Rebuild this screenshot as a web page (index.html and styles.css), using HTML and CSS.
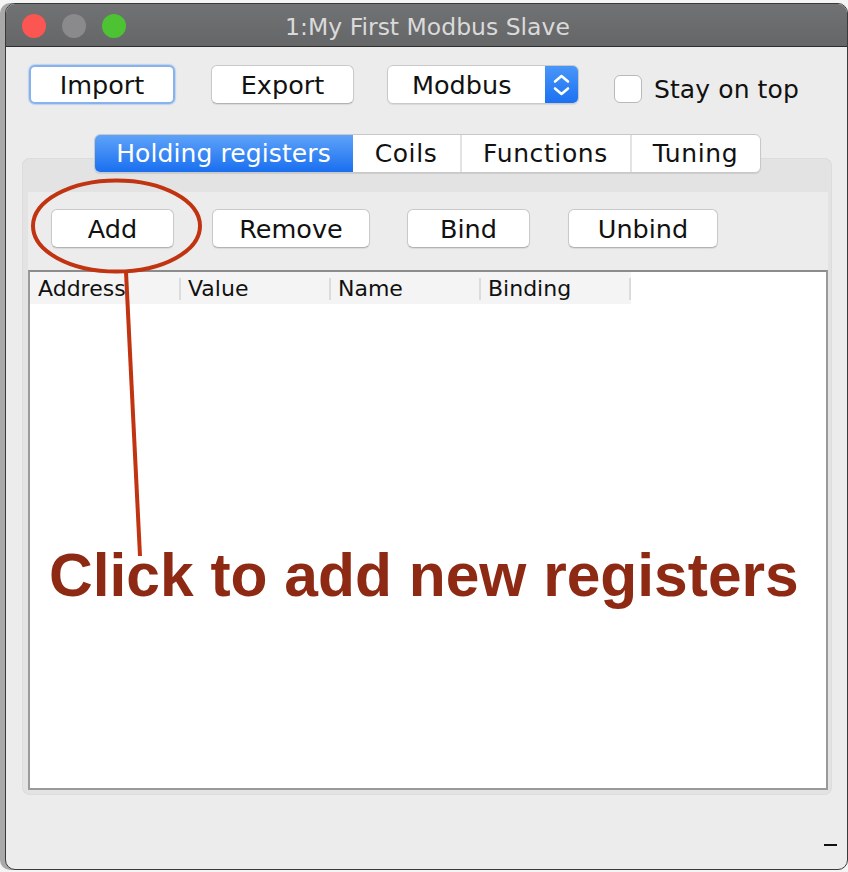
FILE: index.html
```html
<!DOCTYPE html>
<html>
<head>
<meta charset="utf-8">
<link rel="stylesheet" href="styles.css">
</head>
<body>
<div class="window">
  <div class="titlebar">
    <div class="lights">
      <span class="light red"></span>
      <span class="light gray"></span>
      <span class="light green"></span>
    </div>
    <div class="title">1:My First Modbus Slave</div>
  </div>
  <div class="content">
    <div class="toolbar">
      <div class="btn focus w-import">Import</div>
      <div class="btn w-export">Export</div>
      <div class="combo">
        <span class="combo-label">Modbus</span>
        <span class="combo-arrows">
          <svg width="33" height="39" viewBox="0 0 33 39"><path d="M10 16.5 L16.5 11 L23 16.5" fill="none" stroke="#fff" stroke-width="2.6" stroke-linecap="round" stroke-linejoin="round"/><path d="M10 23.5 L16.5 29 L23 23.5" fill="none" stroke="#fff" stroke-width="2.6" stroke-linecap="round" stroke-linejoin="round"/></svg>
        </span>
      </div>
      <div class="check"><span class="box"></span><span class="check-label">Stay on top</span></div>
    </div>
    <div class="tabs">
      <div class="tabgroup">
        <div class="tab active t1">Holding registers</div>
        <div class="tab t2">Coils</div>
        <div class="tab t3">Functions</div>
        <div class="tab t4">Tuning</div>
      </div>
    </div>
    <div class="pane">
      <div class="panel">
        <div class="actions">
          <div class="btn w-add">Add</div>
          <div class="btn w-remove">Remove</div>
          <div class="btn w-bind">Bind</div>
          <div class="btn w-unbind">Unbind</div>
        </div>
        <div class="table">
          <div class="thead">
            <div class="th c1">Address</div>
            <div class="th">Value</div>
            <div class="th">Name</div>
            <div class="th">Binding</div>
          </div>
        </div>
      </div>
    </div>
    <div class="footer"><span class="grip"></span></div>
  </div>
  <svg class="annot" width="840" height="864" viewBox="0 0 840 864">
    <ellipse cx="110.5" cy="222" rx="83.5" ry="45.5" fill="none" stroke="#c13411" stroke-width="4"/>
    <line x1="120" y1="268" x2="134" y2="552" stroke="#c13411" stroke-width="4"/>
  </svg>
  <div class="callout">Click to add new registers</div>
</div>
</body>
</html>
```
FILE: styles.css
```css
html, body {
  margin: 0;
  padding: 0;
}
body {
  width: 848px;
  height: 872px;
  overflow: hidden;
  background: #f4f4f4;
  font-family: "DejaVu Sans", sans-serif;
}
.window {
  position: relative;
  box-sizing: border-box;
  margin: 3px 0 0 5px;
  width: 843px;
  height: 867px;
  border: 1px solid #3a3a3a;
  border-radius: 10px;
  background: #ececec;
  overflow: hidden;
  box-shadow: -5px 0 0 0 #a9a9a9;
}
.titlebar {
  position: relative;
  height: 43px;
  background: linear-gradient(#717274, #656668);
  border-bottom: 1px solid #2e2e2e;
  box-sizing: border-box;
  display: flex;
  align-items: center;
}
.lights {
  display: flex;
  gap: 16px;
  padding-left: 16px;
  margin-top: 1px;
}
.light {
  width: 24px;
  height: 24px;
  border-radius: 50%;
  display: block;
}
.red { background: #fc5652; }
.gray { background: #8a8a8c; }
.green { background: #4dc233; }
.title {
  position: absolute;
  left: 0;
  right: 0;
  top: 3px;
  bottom: 0;
  display: flex;
  align-items: center;
  justify-content: center;
  color: #dadada;
  font-size: 23.5px;
  padding-left: 2px;
}
.content {
  padding: 18px 15px 0 16px;
}
.toolbar {
  display: flex;
  align-items: center;
  margin-left: 7px;
  height: 39px;
}
.btn {
  box-sizing: border-box;
  height: 39px;
  background: #fff;
  border: 1px solid #c9c9c9;
  border-bottom-color: #b3b3b3;
  border-radius: 6px;
  box-shadow: 0 1px 1px rgba(0,0,0,0.08);
  display: flex;
  align-items: center;
  justify-content: center;
  font-size: 25.5px;
  color: #111;
}
.btn.focus {
  border: 2px solid #86b3f0;
  box-shadow: 0 0 1px 1px rgba(110,160,235,0.35);
}
.w-import { width: 146px; margin-right: 36px; }
.w-export { width: 143px; margin-right: 33px; }
.combo {
  box-sizing: border-box;
  width: 192px;
  height: 39px;
  display: flex;
  border: 1px solid #c9c9c9;
  border-radius: 6px;
  overflow: hidden;
  background: #fff;
  box-shadow: 0 1px 1px rgba(0,0,0,0.08);
  margin-right: 35px;
}
.combo-label {
  flex: 1;
  display: flex;
  align-items: center;
  padding-left: 24px;
  font-size: 25.5px;
  color: #111;
}
.combo-arrows {
  width: 33px;
  height: 39px;
  margin-top: -1px;
  background: linear-gradient(#4b97f8, #1970f2);
  display: block;
}
.combo-arrows svg { display: block; }
.check {
  display: flex;
  align-items: center;
  margin-top: 9px;
}
.box {
  box-sizing: border-box;
  width: 28px;
  height: 28px;
  border: 1px solid #b9b9b9;
  border-radius: 6px;
  background: #fff;
  margin-right: 12px;
}
.check-label {
  font-size: 25px;
  letter-spacing: 0.1px;
  color: #111;
}
.tabs {
  margin-top: 30px;
  display: flex;
  justify-content: center;
  position: relative;
  z-index: 1;
}
.tabgroup {
  display: flex;
  height: 39px;
  box-sizing: border-box;
  background: #fff;
  border: 1px solid #c8c8c8;
  border-radius: 6px;
  overflow: hidden;
  box-shadow: 0 1px 1px rgba(0,0,0,0.1);
}
.tab {
  display: flex;
  align-items: center;
  justify-content: center;
  font-size: 25px;
  letter-spacing: 0.6px;
  color: #111;
  border-right: 2px solid #e3e3e3;
  box-sizing: border-box;
}
.tab:last-child { border-right: none; }
.tab.active {
  background: linear-gradient(#5ea3f9, #1a6ff0);
  color: #fff;
  border-right: none;
  letter-spacing: 0.1px;
}
.t1 { width: 258px; }
.t2 { width: 109px; }
.t3 { width: 170px; }
.t4 { width: 128px; }
.pane {
  margin-top: -15px;
  height: 637px;
  box-sizing: border-box;
  background: #e3e3e3;
  border-radius: 8px;
  box-shadow: inset 0 0 0 1px #dcdcdc;
  padding: 34px 4px 5px 6px;
  display: flex;
}
.panel {
  flex: 1;
  background: #ececec;
  display: flex;
  flex-direction: column;
}
.actions {
  display: flex;
  margin-top: 17px;
  padding-left: 23px;
  margin-bottom: 22px;
}
.w-add { width: 123px; margin-right: 38px; }
.w-remove { width: 158px; margin-right: 37px; }
.w-bind { width: 123px; margin-right: 38px; }
.w-unbind { width: 150px; }
.table {
  flex: 1;
  background: #fff;
  border: 2px solid #9a9a9a;
  border-top-color: #8c8c8c;
}
.thead {
  display: flex;
  height: 32px;
  width: 601px;
  background: #f4f4f4;
}
.th {
  box-sizing: border-box;
  width: 150px;
  height: 32px;
  font-size: 22px;
  color: #111;
  padding-left: 7px;
  display: flex;
  align-items: center;
  position: relative;
}
.th.c1 { width: 151px; padding-left: 8px; }
.th::after {
  content: "";
  position: absolute;
  right: 0;
  top: 6px;
  bottom: 4px;
  width: 2px;
  background: #dcdcdc;
}
.footer {
  display: flex;
  justify-content: flex-end;
  margin-top: 49px;
  margin-right: -5px;
}
.grip {
  display: block;
  width: 13px;
  height: 2px;
  background: #111;
}
.annot {
  position: absolute;
  left: 0;
  top: 0;
  pointer-events: none;
}
.callout {
  position: absolute;
  left: 43px;
  top: 541px;
  font-family: "Liberation Sans", Arial, sans-serif;
  font-weight: bold;
  font-size: 60.5px;
  line-height: 60px;
  color: #8e2a14;
  white-space: nowrap;
}
```
